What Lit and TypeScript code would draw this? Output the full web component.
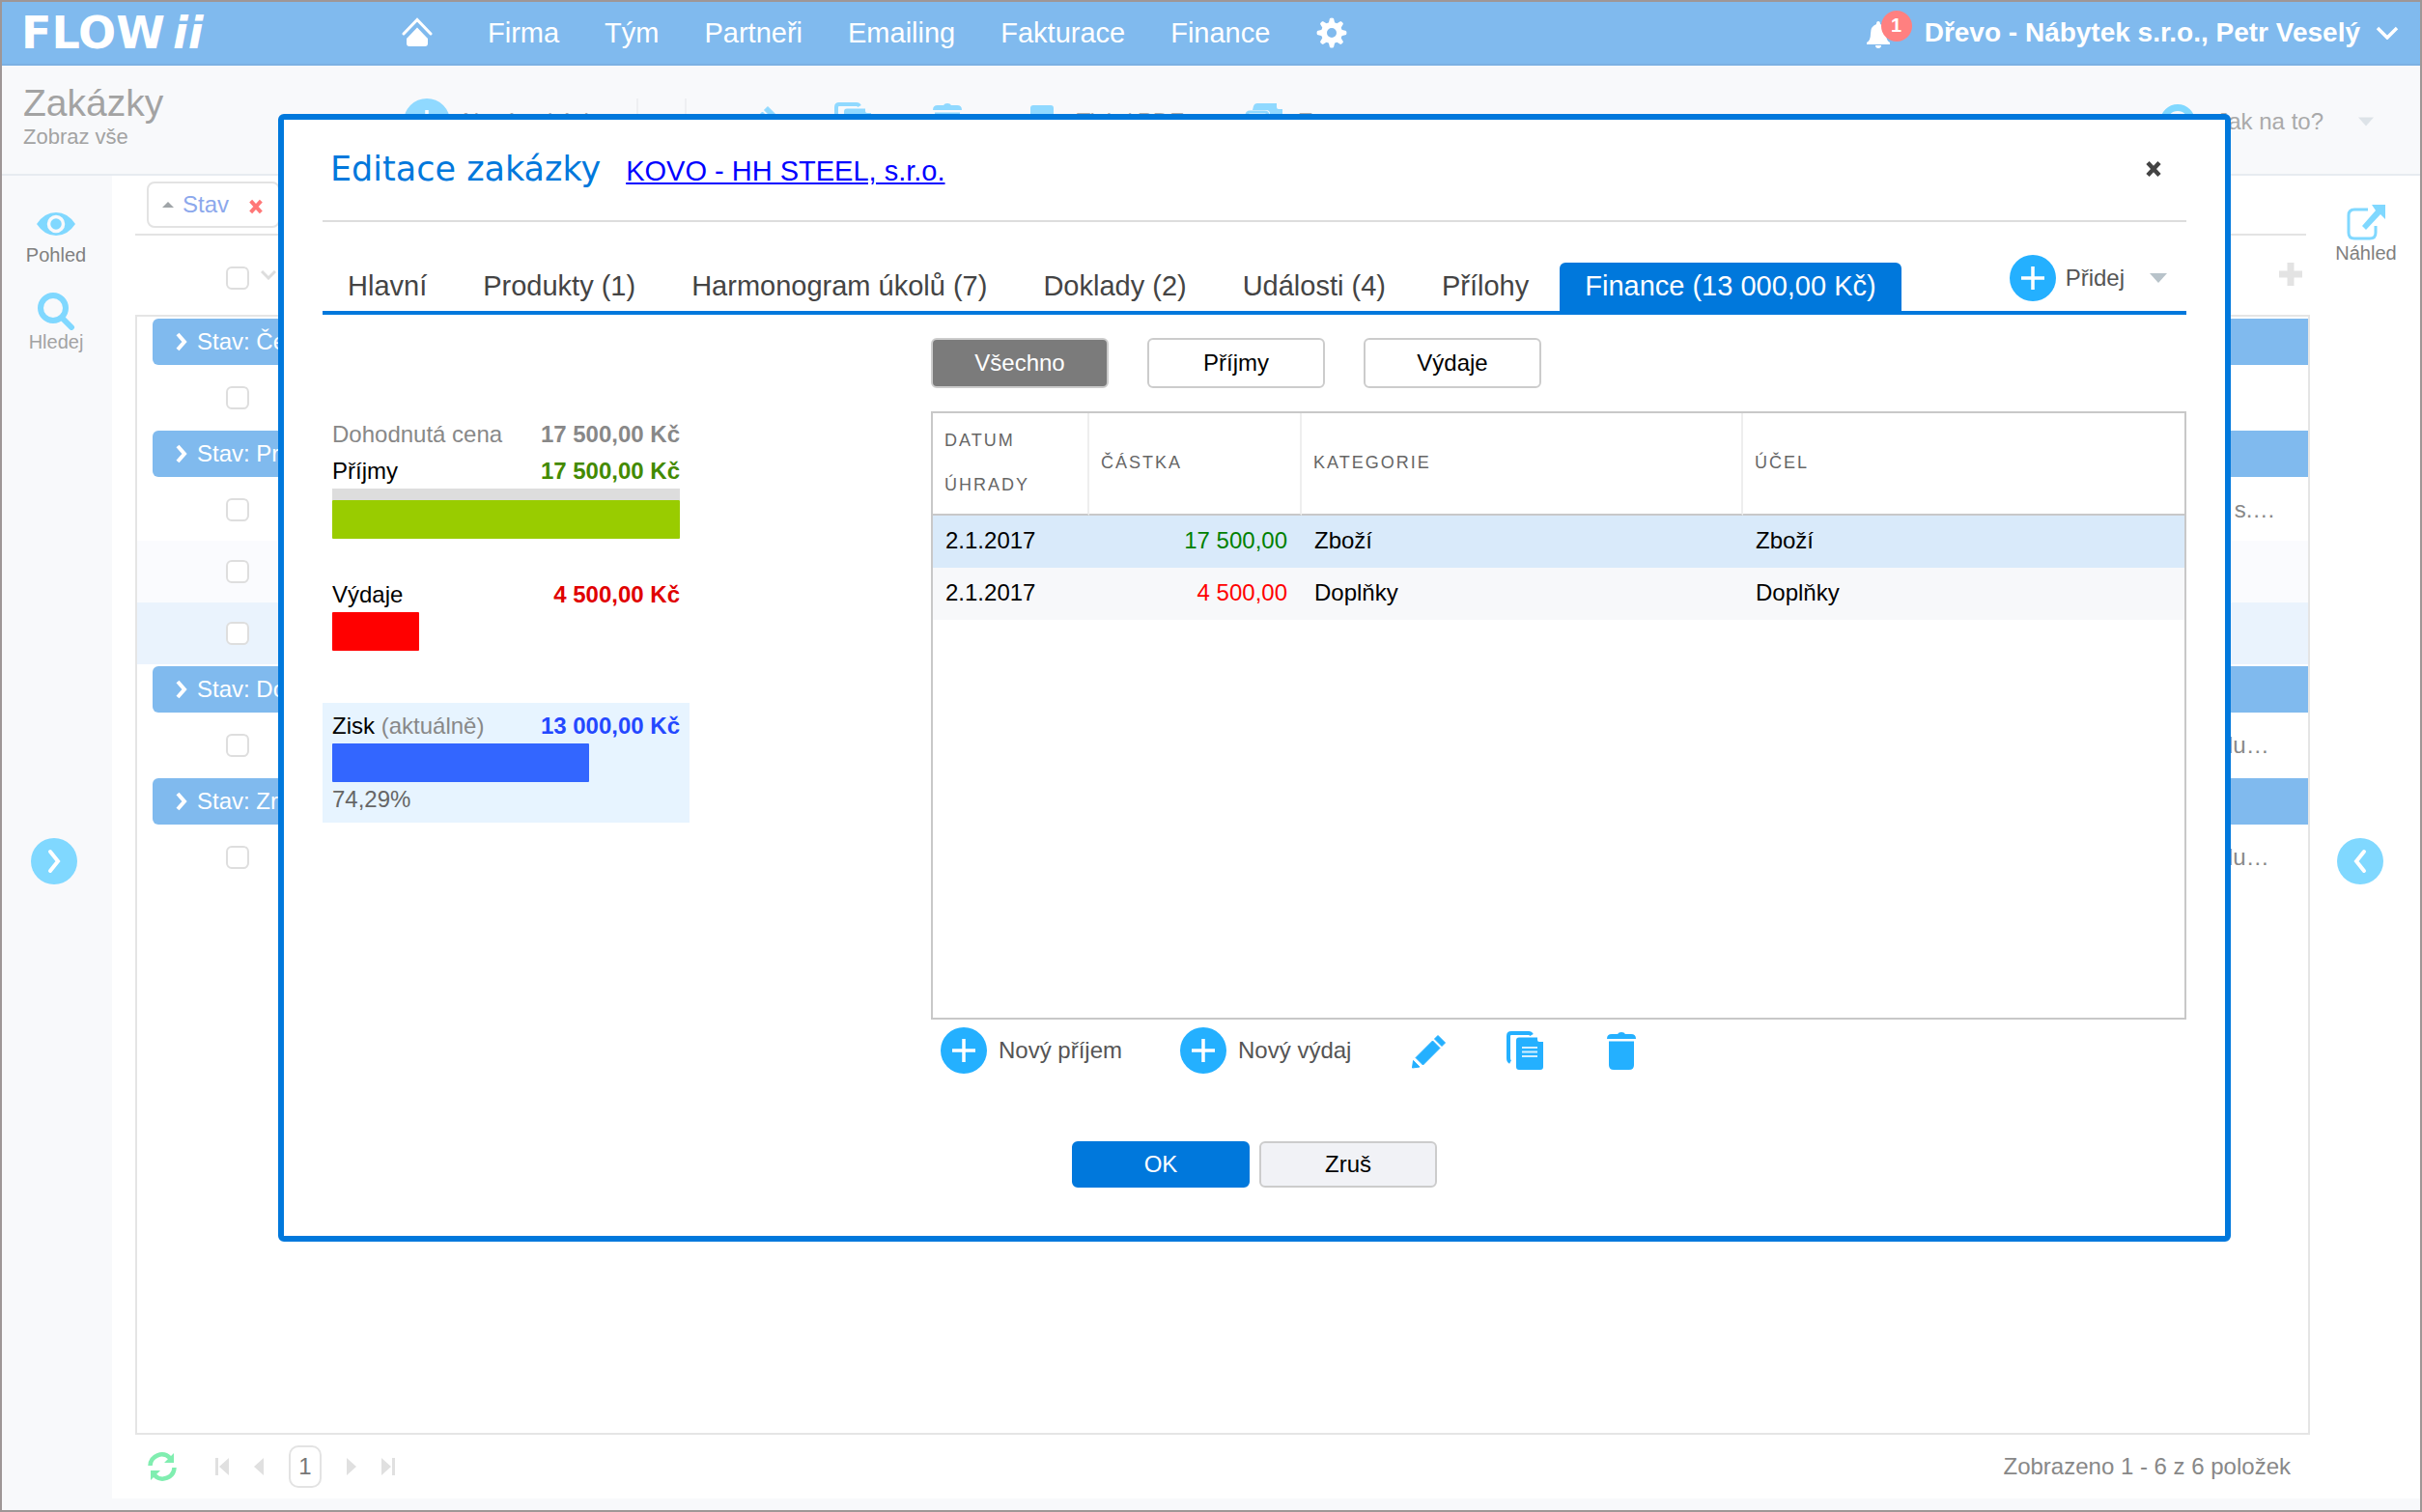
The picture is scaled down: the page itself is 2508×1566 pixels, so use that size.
import { LitElement, html, css, svg, nothing } from "lit";
import { customElement, state } from "lit/decorators.js";
import { classMap } from "lit/directives/class-map.js";
import { styleMap } from "lit/directives/style-map.js";

const plusIcon = html`<svg class="ico48" viewBox="0 0 48 48" aria-hidden="true">
  <circle cx="24" cy="24" r="24" fill="currentColor" />
  <path d="M24 12v24M12 24h24" stroke="#fff" stroke-width="3.500" fill="none" />
</svg>`;

const pencilIcon = html`<svg class="ico40" viewBox="0 0 40 40" aria-hidden="true">
  <g fill="currentColor" stroke="currentColor" stroke-linejoin="round" stroke-width="1">
    <path d="M30 4.500L37.500 12 34 15.500 26.500 8z" />
    <path d="M24.500 10L32 17.500 14.500 35 7 27.500z" />
    <path d="M4.500 30.500L11 37 3.500 38z" />
  </g>
</svg>`;

const copyIcon = html`<svg class="ico40" viewBox="0 0 40 40" aria-hidden="true">
  <path d="M5 32q-2-1-2-4V5q0-3 3-3H24q2 0 3 2" fill="none" stroke="currentColor" stroke-width="4" />
  <path d="M14 6.500H33V9q0 2 2 2h4V37q0 3-3 3H14q-3 0-3-3V9.500q0-3 3-3z" fill="currentColor" />
  <path d="M17 17h16M17 21.500h16M17 26h16" stroke="#fff" stroke-width="2" opacity=".8" />
</svg>`;

const trashIcon = html`<svg class="ico40" viewBox="0 0 40 40" aria-hidden="true">
  <path d="M5 8q0-5 5-5h6q1-2 4-2t4 2h6q5 0 5 5z" fill="currentColor" />
  <path d="M7 10.500H33V35q0 5-5 5H12q-5 0-5-5z" fill="currentColor" />
</svg>`;

const printerIcon = html`<svg class="ico40" viewBox="0 0 40 40" aria-hidden="true">
  <path d="M8 6q0-3 3-3H29q3 0 3 3v6H8zM4 12h32v18h-4v-8H8v8H4zM10 24h20v13H10z" fill="currentColor" />
</svg>`;

const exportIcon = html`<svg class="ico40" viewBox="0 0 40 40" aria-hidden="true">
  <path d="M10 4q1-3 4-3H34V5q0 2 2 2h4V30H27V12q0-4-4-4H9z" fill="currentColor" />
  <rect x="3" y="10" width="22" height="28" rx="3" fill="none" stroke="currentColor" stroke-width="3" />
</svg>`;

const closeX = (size: string) => html`<svg class=${size} viewBox="0 0 18 18" aria-hidden="true">
  <path d="M3 2.500L15 15.500M15 2.500L3 15.500" stroke="currentColor" stroke-width="4.500" fill="none" />
</svg>`;

const caret = html`<svg class="caret" viewBox="0 0 18 10" aria-hidden="true"><path d="M0 0H18L9 10z" fill="currentColor" /></svg>`;

interface Entry {
  date: string;
  amount: string;
  kind: "income" | "expense";
  category: string;
  purpose: string;
}

const ENTRIES: Entry[] = [
  { date: "2.1.2017", amount: "17 500,00", kind: "income", category: "Zboží", purpose: "Zboží" },
  { date: "2.1.2017", amount: "4 500,00", kind: "expense", category: "Doplňky", purpose: "Doplňky" },
];

const TABS = [
  "Hlavní",
  "Produkty (1)",
  "Harmonogram úkolů (7)",
  "Doklady (2)",
  "Události (4)",
  "Přílohy",
  "Finance (13 000,00 Kč)",
];

const FILTERS: { label: string; kind?: Entry["kind"] }[] = [
  { label: "Všechno" },
  { label: "Příjmy", kind: "income" },
  { label: "Výdaje", kind: "expense" },
];

const GROUPS: { title: string; rows: { note: string; tone?: string }[] }[] = [
  { title: "Stav: Čeká", rows: [{ note: "" }] },
  { title: "Stav: Prob.", rows: [{ note: "\u00a0s.…" }, { note: "", tone: "striped" }, { note: "", tone: "selected" }] },
  { title: "Stav: Dok.", rows: [{ note: "lu…" }] },
  { title: "Stav: Zruš.", rows: [{ note: "lu…" }] },
];

const base = css`
  * { box-sizing: border-box; }
  button {
    font: inherit;
    color: inherit;
    background: none;
    border: 0;
    margin: 0;
    padding: 0;
    cursor: pointer;
    display: inline-flex;
    align-items: center;
  }
  a { color: inherit; text-decoration: none; }
  svg { display: block; flex: none; }
  .ico48 { width: 48px; height: 48px; }
  .ico40 { width: 40px; height: 40px; }
  .caret { width: 18px; height: 10px; }
`;

@customElement("order-dialog")
export class OrderDialog extends LitElement {
  static styles = [
    base,
    css`
      :host {
        display: block;
        background: #fff;
        border: 6px solid #0078dc;
        border-radius: 6px;
        padding: 0 40px 50px;
        font-size: 24px;
        line-height: 28px;
        color: #000;
      }
      .head {
        display: flex;
        align-items: baseline;
        gap: 26px;
        padding: 31px 24px 33px 8px;
        border-bottom: 2px solid #ddd;
      }
      h2 {
        margin: 0;
        font: 400 35px/40px "DejaVu Sans", sans-serif;
        color: #0078dc;
      }
      .partner { font-size: 29px; color: #00f; text-decoration: underline; }
      .close { margin-left: auto; color: #444; align-self: center; }
      .x18 { width: 20px; height: 18px; }
      .tabbar {
        display: flex;
        align-items: flex-end;
        padding-top: 34px;
        border-bottom: 4px solid #0078dc;
      }
      .tabs { display: flex; gap: 6px; }
      .tab {
        font-size: 29px;
        line-height: 48px;
        padding: 0 26px 2px;
        color: #444;
        border-radius: 6px 6px 0 0;
        white-space: nowrap;
      }
      .tab.on { background: #0078dc; color: #fff; }
      .add { margin: 0 20px 10px auto; color: #555; gap: 10px; }
      .add .ico48, .tools { color: #24b0ff; }
      .add .caret { color: #b8c3ca; margin-left: 16px; }
      .cols { display: flex; }
      .stats { flex: none; width: 380px; margin-right: 250px; padding-top: 104px; }
      .stat { padding: 0 10px; margin-bottom: 38px; }
      .line { display: flex; justify-content: space-between; line-height: 36px; padding-top: 2px; }
      .line b { white-space: nowrap; }
      .muted { color: #888; }
      .green { color: #438a00; }
      .red { color: #e00000; }
      .blue { color: #2448ff; }
      .track { height: 12px; background: #ddd; }
      .bar { height: 40px; border-radius: 1px; }
      .bar.income { background: #9c0; }
      .bar.expense { background: #f00; }
      .bar.profit { background: #36f; }
      .stat.box { background: #e7f4ff; padding: 4px 10px 6px; margin: 54px 0 0; }
      .pct { line-height: 36px; color: #666; }
      .main { flex: 1; min-width: 0; padding-top: 24px; }
      .filters { display: flex; gap: 40px; margin-bottom: 24px; }
      .btn {
        justify-content: center;
        width: 184px;
        height: 48px;
        border: 2px solid #ccc;
        border-radius: 6px;
      }
      .filters .btn { height: 52px; }
      .filters .btn.on { background: #7b7b7b; color: #fff; }
      .grid { min-height: 630px; border: 2px solid #c8c8c8; }
      table { width: 100%; border-collapse: separate; border-spacing: 0; table-layout: fixed; }
      .c-date { width: 162px; }
      .c-amount { width: 220px; }
      th {
        height: 106px;
        padding: 0 12px 3px;
        font-weight: 400;
        font-size: 18px;
        line-height: 46px;
        letter-spacing: 2px;
        text-align: left;
        text-transform: uppercase;
        color: #666;
        border-bottom: 2px solid #c8c8c8;
        border-right: 2px solid #eee;
      }
      th:last-child { border-right: 0; }
      td { height: 54px; padding: 0 15px 2px 13px; }
      tbody tr:nth-child(odd) { background: #d9eafa; }
      tbody tr:nth-child(even) { background: #f7f8fa; }
      .amount { text-align: right; }
      .amount.income { color: #008000; }
      .amount.expense { color: #f00; }
      .tools { display: flex; align-items: center; gap: 60px; padding: 8px 10px 0; }
      .tools .labelled { gap: 12px; }
      .tools span { color: #555; }
      .actions { display: flex; justify-content: center; gap: 10px; margin-top: 70px; }
      .ok { background: #0078dc; border-color: #0078dc; color: #fff; }
      .cancel { background: #f1f2f6; }
    `,
  ];

  @state() private tab = TABS.length - 1;
  @state() private filter = 0;

  render() {
    const kind = FILTERS[this.filter].kind;
    const rows = ENTRIES.filter((e) => !kind || e.kind === kind);
    return html`
      <header class="head">
        <h2>Editace zakázky</h2>
        <a class="partner" href="#partner">KOVO - HH STEEL, s.r.o.</a>
        <button class="close" aria-label="Zavřít">${closeX("x18")}</button>
      </header>
      <div class="tabbar">
        <div class="tabs" role="tablist">
          ${TABS.map(
            (t, i) => html`<button
              role="tab"
              aria-selected=${i === this.tab}
              class=${classMap({ tab: true, on: i === this.tab })}
              @click=${() => (this.tab = i)}
            >${t}</button>`,
          )}
        </div>
        <button class="add">${plusIcon}<span>Přidej</span>${caret}</button>
      </div>
      <div class="cols">
        <section class="stats">
          <div class="stat">
            <div class="line muted"><span>Dohodnutá cena</span><b>17 500,00 Kč</b></div>
            <div class="line"><span>Příjmy</span><b class="green">17 500,00 Kč</b></div>
            <div class="track"></div>
            <div class="bar income" style=${styleMap({ width: "100%" })}></div>
          </div>
          <div class="stat">
            <div class="line"><span>Výdaje</span><b class="red">4 500,00 Kč</b></div>
            <div class="bar expense" style=${styleMap({ width: "25%" })}></div>
          </div>
          <div class="stat box">
            <div class="line"><span>Zisk <span class="muted">(aktuálně)</span></span><b class="blue">13 000,00 Kč</b></div>
            <div class="bar profit" style=${styleMap({ width: "74%" })}></div>
            <div class="pct">74,29%</div>
          </div>
        </section>
        <section class="main">
          <div class="filters">
            ${FILTERS.map(
              (f, i) => html`<button class=${classMap({ btn: true, on: i === this.filter })} @click=${() => (this.filter = i)}>${f.label}</button>`,
            )}
          </div>
          <div class="grid">
            <table>
              <thead>
                <tr>
                  <th class="c-date">Datum úhrady</th>
                  <th class="c-amount">Částka</th>
                  <th>Kategorie</th>
                  <th>Účel</th>
                </tr>
              </thead>
              <tbody>
                ${rows.map(
                  (e) => html`<tr>
                    <td>${e.date}</td>
                    <td class="amount ${e.kind}">${e.amount}</td>
                    <td>${e.category}</td>
                    <td>${e.purpose}</td>
                  </tr>`,
                )}
              </tbody>
            </table>
          </div>
          <div class="tools">
            <button class="labelled">${plusIcon}<span>Nový příjem</span></button>
            <button class="labelled">${plusIcon}<span>Nový výdaj</span></button>
            <button aria-label="Upravit">${pencilIcon}</button>
            <button aria-label="Kopírovat">${copyIcon}</button>
            <button aria-label="Smazat">${trashIcon}</button>
          </div>
        </section>
      </div>
      <div class="actions">
        <button class="btn ok">OK</button>
        <button class="btn cancel">Zruš</button>
      </div>
    `;
  }
}

@customElement("app-root")
export class AppRoot extends LitElement {
  static styles = [
    base,
    css`
      :host {
        display: flex;
        flex-direction: column;
        position: relative;
        box-sizing: border-box;
        min-height: 100vh;
        border: 2px solid #9e9696;
        background: #fff;
        font-family: "Liberation Sans", Arial, sans-serif;
        font-size: 24px;
        line-height: 28px;
        color: #888;
      }
      .top {
        display: flex;
        align-items: center;
        height: 66px;
        padding: 0 22px 0 20px;
        background: #80baee;
        border-bottom: 2px solid #7cb1e3;
        color: #fff;
        font-size: 29px;
        line-height: 36px;
        white-space: nowrap;
      }
      .brand {
        width: 394px;
        display: flex;
        gap: 8px;
        font: 700 46px/60px "DejaVu Sans", sans-serif;
      }
      .brand i { font-style: italic; }
      .nav { display: flex; align-items: center; gap: 47px; }
      .home svg { width: 32px; height: 32px; margin: 0 10px 2px 0; }
      .gear svg { width: 34px; height: 34px; }
      .user { margin-left: auto; display: flex; align-items: center; }
      .bell { position: relative; width: 60px; height: 46px; }
      .bell svg { width: 26px; height: 28px; margin-top: 4px; }
      .badge {
        position: absolute;
        left: 15px;
        top: 0;
        width: 32px;
        height: 32px;
        border-radius: 50%;
        background: #ff8080;
        font: 700 20px/30px "Liberation Sans", sans-serif;
        text-align: center;
      }
      .account { font-size: 28px; font-weight: 700; gap: 16px; }
      .account svg { width: 24px; height: 14px; }
      .sub {
        display: flex;
        align-items: flex-start;
        height: 114px;
        padding: 0 48px 0 22px;
        background: #f8f9fb;
        border-bottom: 2px solid #e7ebf0;
        white-space: nowrap;
      }
      .heading { width: 394px; padding-top: 17px; color: #a3a3a3; }
      h1 { margin: 0; font-weight: 400; font-size: 39px; line-height: 44px; }
      .heading p { margin: 0; font-size: 22px; line-height: 26px; }
      .bar { display: flex; align-items: center; flex: 1; padding-top: 34px; color: #90d9ff; }
      .bar span { color: #aaa; }
      .bar button { gap: 13px; }
      .sep { width: 2px; height: 48px; background: #eeeff2; margin-left: 29px; }
      .sep + .sep { margin: 0 54px 0 48px; }
      .set { display: flex; gap: 58px; }
      .set .labelled { padding-right: 4px; gap: 16px; }
      .help { margin-left: auto; }
      .bar .help { gap: 22px; }
      .help .ring { width: 36px; height: 36px; }
      .help .caret { color: #dde3e8; margin-left: 14px; width: 16px; }
      .body { flex: 1; display: flex; }
      .side {
        flex: none;
        width: 114px;
        padding: 30px 2px 0 0;
        display: flex;
        flex-direction: column;
        align-items: center;
        font-size: 20px;
        line-height: 24px;
      }
      .side.left { background: #f8f9fb; }
      .side.right { padding: 28px 0 0 2px; }
      .side button { flex-direction: column; color: #808080; }
      .side button + button { margin-top: 26px; }
      .side svg { color: #80d8ff; }
      .side .soft { color: #a3a3a3; }
      .side.left .toggle { margin: 502px 4px 0 0; }
      .side.right .toggle { margin: 594px 12px 0 0; }
      .content { flex: 1; min-width: 0; padding-left: 24px; display: flex; flex-direction: column; }
      .chips { padding: 6px 0 6px 12px; margin-right: 4px; border-bottom: 2px solid #e3e3e3; }
      .chip {
        display: inline-flex;
        align-items: center;
        width: 138px;
        height: 48px;
        padding: 0 14px;
        border: 2px solid #e3e3e3;
        border-radius: 8px;
        color: #8ca8ec;
        gap: 9px;
        vertical-align: top;
      }
      .chip .up { width: 12px; height: 6px; color: #a0a5a8; }
      .chip .x { color: #f77; margin: 4px 0 0 10px; }
      .x16 { width: 18px; height: 16px; }
      .colhead { display: flex; align-items: center; height: 82px; padding: 6px 7px 0 94px; gap: 12px; }
      .colhead .chev { width: 16px; height: 10px; margin-bottom: 6px; }
      .colhead .more { margin: 0 0 8px auto; }
      .colhead .more svg { width: 26px; height: 26px; }
      input[type="checkbox"] {
        appearance: none;
        display: block;
        width: 24px;
        height: 24px;
        margin: 0;
        border: 2px solid #dedede;
        border-radius: 6px;
        background: #fff;
      }
      .list { flex: 1; border: 2px solid #e5e5e5; }
      table { width: 100%; border-collapse: separate; border-spacing: 0; }
      td { height: 64px; padding: 0; }
      .group td { height: 52px; padding: 2px 0 2px 16px; }
      .group button {
        width: 100%;
        height: 48px;
        padding-left: 24px;
        gap: 10px;
        background: #80baee;
        color: #fff;
        border-radius: 6px 0 0 6px;
      }
      .group svg { width: 12px; height: 20px; }
      .pick { padding-left: 92px; }
      .note { width: 83px; white-space: nowrap; }
      .striped { background: #fafbfe; }
      .selected { background: #eaf3fd; }
      .pager { display: flex; align-items: center; gap: 26px; height: 66px; padding: 0 20px 0 13px; }
      .pager button { color: #e0e0e0; }
      .pager .refresh { color: #80eeb0; margin-right: 14px; }
      .refresh svg { width: 30px; height: 30px; }
      .end svg { width: 14px; height: 18px; }
      .step svg { width: 10px; height: 18px; }
      .pager .page {
        width: 34px;
        height: 44px;
        justify-content: center;
        border: 2px solid #e3e3e3;
        border-radius: 10px;
        color: #777;
      }
      .count { margin-left: auto; }
      .foot { height: 12px; background: #f8f9fb; }
      .overlay { position: absolute; inset: 0; padding: 116px 196px 0 286px; }
    `,
  ];

  private chevron(d: string, cls = "") {
    return html`<svg class=${cls} viewBox="0 0 12 20" aria-hidden="true">
      <path d=${d} fill="none" stroke="#fff" stroke-width="4" />
    </svg>`;
  }

  private round(d: string) {
    return html`<svg class="ico48" viewBox="0 0 48 48" aria-hidden="true">
      <circle cx="24" cy="24" r="24" fill="currentColor" />
      <path d=${d} fill="none" stroke="#fff" stroke-width="4" stroke-linecap="round" />
    </svg>`;
  }

  private renderTop() {
    return html`<header class="top">
      <a class="brand" href="#"><span>FLOW</span><i>ii</i></a>
      <nav class="nav">
        <a class="home" href="#home" aria-label="Domů">
          <svg viewBox="0 0 32 32"><path d="M2 18L16 3.500 30 18" fill="none" stroke="#fff" stroke-width="3" stroke-linecap="round" /><path d="M16 11.500L27 23v5q0 3-3 3H8q-3 0-3-3v-5z" fill="#fff" /></svg>
        </a>
        ${["Firma", "Tým", "Partneři", "Emailing", "Fakturace", "Finance"].map((n) => html`<a href="#${n}">${n}</a>`)}
        <a class="gear" href="#settings" aria-label="Nastavení">
          <svg viewBox="0 0 34 34">
            <path fill-rule="evenodd" fill="#fff" d="M17 6a11 11 0 1 0 0 22a11 11 0 1 0 0-22zM17 12a5 5 0 1 1 0 10a5 5 0 1 1 0-10z" />
            ${[0, 45, 90, 135, 180, 225, 270, 315].map(
              (a) => svg`<path d="M13.500 8L15 2Q17 1 19 2L20.500 8z" fill="#fff" transform="rotate(${a} 17 17)" />`,
            )}
          </svg>
        </a>
      </nav>
      <div class="user">
        <button class="bell" aria-label="Upozornění">
          <svg viewBox="0 0 26 28"><path d="M12 0q2 0 2 3q6 2 6 10q0 7 4 9v2H0v-2q4-2 4-9Q4 5 10 3q0-3 2-3zM9 25h6q0 3-3 3t-3-3z" fill="#fff" /></svg>
          <span class="badge">1</span>
        </button>
        <button class="account">
          Dřevo - Nábytek s.r.o., Petr Veselý
          <svg viewBox="0 0 24 14"><path d="M2 2L12 12 22 2" fill="none" stroke="#fff" stroke-width="3.500" /></svg>
        </button>
      </div>
    </header>`;
  }

  private renderSub() {
    return html`<div class="sub">
      <div class="heading">
        <h1>Zakázky</h1>
        <p>Zobraz vše</p>
      </div>
      <div class="bar">
        <button>${plusIcon}<span>Nová zakázka</span></button>
        <div class="sep"></div>
        <div class="sep"></div>
        <div class="set">
          <button aria-label="Upravit">${pencilIcon}</button>
          <button aria-label="Kopírovat">${copyIcon}</button>
          <button aria-label="Smazat">${trashIcon}</button>
          <button class="labelled">${printerIcon}<span>Tisk / PDF</span></button>
          <button class="labelled">${exportIcon}<span>Export</span></button>
        </div>
        <button class="help">
          <svg class="ring" viewBox="0 0 36 36"><circle cx="18" cy="18" r="14.500" fill="none" stroke="#80d8ff" stroke-width="7" /></svg>
          <span>Jak na to?</span>${caret}
        </button>
      </div>
    </div>`;
  }

  private renderList() {
    return html`<div class="list">
      <table>
        <tbody>
          ${GROUPS.map(
            (g) => html`
              <tr class="group">
                <td colspan="2"><button>${this.chevron("M2 2L9 10 2 18")}${g.title}</button></td>
              </tr>
              ${g.rows.map(
                (r) => html`<tr class=${r.tone ?? nothing}>
                  <td class="pick"><input type="checkbox" aria-label="Vybrat zakázku" /></td>
                  <td class="note">${r.note}</td>
                </tr>`,
              )}
            `,
          )}
        </tbody>
      </table>
    </div>`;
  }

  render() {
    return html`
      ${this.renderTop()} ${this.renderSub()}
      <div class="body">
        <aside class="side left">
          <button>
            <svg class="ico40" viewBox="0 0 40 40">
              <path d="M0 20Q8 8 20 8T40 20Q32 32 20 32T0 20z" fill="currentColor" />
              <circle cx="20" cy="20" r="7.500" fill="currentColor" stroke="#f8f9fb" stroke-width="3.500" />
            </svg>
            Pohled
          </button>
          <button class="soft">
            <svg class="ico40" viewBox="0 0 40 40">
              <circle cx="17" cy="17" r="13" fill="none" stroke="currentColor" stroke-width="6" />
              <path d="M26 27L36 37" stroke="currentColor" stroke-width="6" stroke-linecap="round" />
            </svg>
            Hledej
          </button>
          <button class="toggle" aria-label="Rozbalit panel">${this.round("M20 14L28 24 20 34")}</button>
        </aside>
        <main class="content">
          <div class="chips">
            <span class="chip">
              <svg class="up" viewBox="0 0 12 6"><path d="M0 6L6 0 12 6z" fill="currentColor" /></svg>
              Stav
              <button class="x" aria-label="Odebrat">${closeX("x16")}</button>
            </span>
          </div>
          <div class="colhead">
            <input type="checkbox" aria-label="Vybrat vše" />
            <svg class="chev" viewBox="0 0 16 10"><path d="M1 1L8 8 15 1" fill="none" stroke="#ddd" stroke-width="3" /></svg>
            <button class="more" aria-label="Přidat sloupec">
              <svg viewBox="0 0 26 26"><path d="M13 1v24M1 13h24" stroke="#e3e3e3" stroke-width="7" /></svg>
            </button>
          </div>
          ${this.renderList()}
          <div class="pager">
            <button class="refresh" aria-label="Obnovit">
              <svg viewBox="0 0 30 30">
                <path d="M2.500 14A12 12 0 0 1 23 6M27.500 16A12 12 0 0 1 7 24" fill="none" stroke="currentColor" stroke-width="4.500" />
                <path d="M27 1V11H17zM3 29V19H13z" fill="currentColor" />
              </svg>
            </button>
            <button class="end" aria-label="První"><svg viewBox="0 0 14 18"><path d="M0 0h3v18H0zM14 0v18L4 9z" fill="currentColor" /></svg></button>
            <button class="step" aria-label="Předchozí"><svg viewBox="0 0 10 18"><path d="M10 0v18L0 9z" fill="currentColor" /></svg></button>
            <button class="page">1</button>
            <button class="step" aria-label="Další"><svg viewBox="0 0 10 18"><path d="M0 0v18L10 9z" fill="currentColor" /></svg></button>
            <button class="end" aria-label="Poslední"><svg viewBox="0 0 14 18"><path d="M11 0h3v18h-3zM0 0v18L10 9z" fill="currentColor" /></svg></button>
            <span class="count">Zobrazeno 1 - 6 z 6 položek</span>
          </div>
        </main>
        <aside class="side right">
          <button>
            <svg class="ico40" viewBox="0 0 40 40">
              <path d="M22 7H8Q2 7 2 13V31Q2 37 8 37H24Q30 37 30 31V24" fill="none" stroke="currentColor" stroke-width="3" />
              <path d="M26 2H40V17L35 12 20 28 16 24 30 8z" fill="currentColor" />
            </svg>
            Náhled
          </button>
          <button class="toggle" aria-label="Rozbalit náhled">${this.round("M28 14L20 24 28 34")}</button>
        </aside>
      </div>
      <footer class="foot"></footer>
      <div class="overlay"><order-dialog role="dialog" aria-label="Editace zakázky"></order-dialog></div>
    `;
  }
}
